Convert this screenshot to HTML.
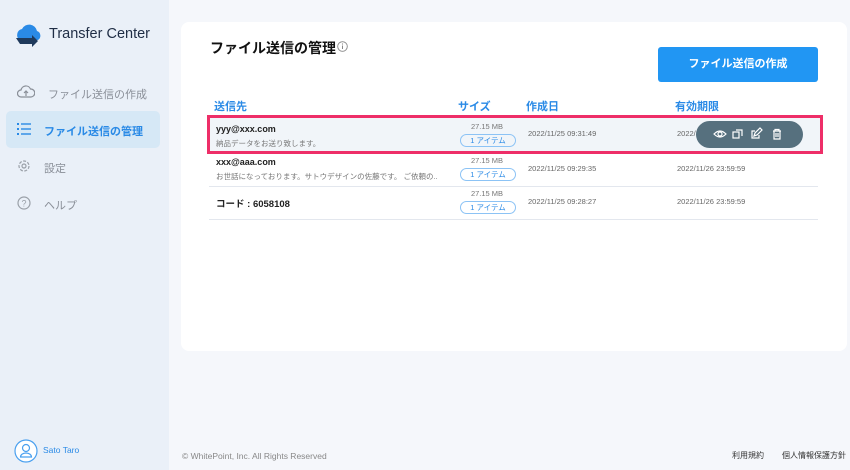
<!DOCTYPE html>
<html><head><meta charset="utf-8"><style>
*{margin:0;padding:0;box-sizing:border-box}
body{width:850px;height:470px;position:relative;background:#f5f7fb;font-family:"Liberation Sans","Noto Sans CJK JP",sans-serif;overflow:hidden}
.side{position:absolute;left:0;top:0;width:169px;height:470px;background:#eaf0f8}
.abs{position:absolute;white-space:nowrap}
.card{position:absolute;left:181px;top:22px;width:666px;height:329px;background:#fff;border-radius:8px}
.nav{font-size:11px;color:#8a8f98}
.hd{font-size:11px;font-weight:bold;color:#2a8ae6}
.sep{position:absolute;left:209px;width:609px;height:1px;background:#e3e7ee}
.email{font-size:9px;font-weight:bold;color:#222}
.msg{font-size:7.5px;color:#777}
.mb{font-size:7.5px;color:#777;text-align:center;width:60px}
.pill{position:absolute;width:56px;height:13px;border:1px solid #8cc3f5;border-radius:7px;font-size:7.5px;color:#2a8ae6;text-align:center;line-height:11px}
.date{font-size:7.5px;color:#666}
</style></head><body>
<div class="side">
<svg class="abs" style="left:14px;top:22px" width="30" height="28" viewBox="0 0 30 28"><path d="M6 18a6 6 0 0 1 2-11a8 8 0 0 1 15 2a5 5 0 0 1 1 9z" fill="#2a8ae6"/><path d="M2 16h16v-3l6 6-6 6v-3H6z" fill="#1f3a5c"/></svg>
<div class="abs" style="left:49px;top:26px;font-size:14.5px;color:#1f2d45">Transfer Center</div>
<svg class="abs" style="left:17px;top:84px" width="18" height="16" viewBox="0 0 18 16"><path d="M4 13a3.5 3.5 0 0 1 0-7a5 5 0 0 1 9.5-1a3.8 3.8 0 0 1 .5 8z" fill="none" stroke="#8a8f98" stroke-width="1.2"/><path d="M9 12V7M7 9l2-2 2 2" fill="none" stroke="#8a8f98" stroke-width="1.2"/></svg>
<div class="abs nav" style="left:48px;top:86px">ファイル送信の作成</div>
<div class="abs" style="left:6px;top:111px;width:154px;height:37px;background:#d6e8f6;border-radius:5px"></div>
<svg class="abs" style="left:17px;top:123px" width="14" height="12" viewBox="0 0 14 12"><g fill="#2a8ae6"><rect x="0" y="0" width="2" height="2"/><rect x="0" y="5" width="2" height="2"/><rect x="0" y="10" width="2" height="2"/><rect x="4" y="0.3" width="10" height="1.4"/><rect x="4" y="5.3" width="10" height="1.4"/><rect x="4" y="10.3" width="10" height="1.4"/></g></svg>
<div class="abs" style="left:44px;top:123px;font-size:11px;font-weight:bold;color:#2a8ae6">ファイル送信の管理</div>
<svg class="abs" style="left:17px;top:159px" width="14" height="14" viewBox="0 0 14 14"><circle cx="7" cy="7" r="5" fill="none" stroke="#9aa0a8" stroke-width="1.2" stroke-dasharray="3 1.5"/><circle cx="7" cy="7" r="2" fill="none" stroke="#9aa0a8" stroke-width="1.2"/></svg>
<div class="abs nav" style="left:44px;top:160px">設定</div>
<svg class="abs" style="left:17px;top:196px" width="14" height="14" viewBox="0 0 14 14"><circle cx="7" cy="7" r="6" fill="none" stroke="#9aa0a8" stroke-width="1.2"/><text x="7" y="10.5" font-size="9" text-anchor="middle" fill="#9aa0a8" font-family="Liberation Sans">?</text></svg>
<div class="abs nav" style="left:44px;top:197px">ヘルプ</div>
<svg class="abs" style="left:14px;top:439px" width="24" height="24" viewBox="0 0 24 24"><circle cx="12" cy="12" r="11" fill="#fff" stroke="#4aa0ef" stroke-width="1.2"/><circle cx="12" cy="9" r="3.5" fill="none" stroke="#4aa0ef" stroke-width="1.2"/><path d="M6.5 18a5.5 4 0 0 1 11 0z" fill="none" stroke="#4aa0ef" stroke-width="1.2"/></svg>
<div class="abs" style="left:43px;top:445px;font-size:8.5px;color:#2a8ae6">Sato Taro</div>
</div>
<div class="card"></div>
<div class="abs" style="left:210px;top:38px;font-size:14px;font-weight:bold;color:#111">ファイル送信の管理</div>
<svg class="abs" style="left:337px;top:41px" width="11" height="11" viewBox="0 0 11 11"><circle cx="5.5" cy="5.5" r="4.8" fill="none" stroke="#888" stroke-width="0.9"/><path d="M5.5 4.5v3.5" stroke="#888"/><circle cx="5.5" cy="3" r=".6" fill="#888"/></svg>
<div class="abs" style="left:658px;top:47px;width:160px;height:35px;background:#2196f3;border-radius:3px;color:#fff;font-size:11px;font-weight:bold;text-align:center;line-height:35px">ファイル送信の作成</div>
<div class="abs hd" style="left:214px;top:98px">送信先</div>
<div class="abs hd" style="left:458px;top:98px">サイズ</div>
<div class="abs hd" style="left:526px;top:98px">作成日</div>
<div class="abs hd" style="left:675px;top:98px">有効期限</div>
<div class="abs" style="left:207px;top:115px;width:616px;height:39px;background:#f1f5f9;border:3px solid #ee2e68"></div>
<div class="sep" style="top:186px"></div>
<div class="sep" style="top:219px"></div>
<div class="abs email" style="left:216px;top:124px">yyy@xxx.com</div>
<div class="abs msg" style="left:216px;top:138px">納品データをお送り致します。</div>
<div class="abs mb" style="left:457px;top:122px">27.15 MB</div>
<div class="pill" style="left:460px;top:134px">1 アイテム</div>
<div class="abs date" style="left:528px;top:129px">2022/11/25 09:31:49</div>
<div class="abs date" style="left:677px;top:129px">2022/11/26 23:59:59</div>
<div class="abs" style="left:696px;top:121px;width:107px;height:27px;background:#56707e;border-radius:14px"></div>
<svg class="abs" style="left:713px;top:127px" width="80" height="14" viewBox="0 0 80 14" fill="none" stroke="#fff" stroke-width="1.2"><path d="M1 7q6-6 12 0q-6 6-12 0z"/><circle cx="7" cy="7" r="2"/><rect x="20" y="5" width="6" height="6"/><path d="M23 3h6v6"/><path d="M42 4h-3v7h7v-3M41 9l1-3 5-5 2 2-5 5z"/><path d="M60 4h8M62 4v-1.5h4V4M61 4v8h6V4M63 6v4M65 6v4"/></svg>
<div class="abs email" style="left:216px;top:157px">xxx@aaa.com</div>
<div class="abs msg" style="left:216px;top:171px">お世話になっております。サトウデザインの佐藤です。 ご依頼の..</div>
<div class="abs mb" style="left:457px;top:156px">27.15 MB</div>
<div class="pill" style="left:460px;top:168px">1 アイテム</div>
<div class="abs date" style="left:528px;top:164px">2022/11/25 09:29:35</div>
<div class="abs date" style="left:677px;top:164px">2022/11/26 23:59:59</div>
<div class="abs" style="left:216px;top:196px;font-size:9.5px;font-weight:bold;color:#222">コード : 6058108</div>
<div class="abs mb" style="left:457px;top:189px">27.15 MB</div>
<div class="pill" style="left:460px;top:201px">1 アイテム</div>
<div class="abs date" style="left:528px;top:197px">2022/11/25 09:28:27</div>
<div class="abs date" style="left:677px;top:197px">2022/11/26 23:59:59</div>
<div class="abs" style="left:182px;top:451px;font-size:8.5px;color:#888">© WhitePoint, Inc. All Rights Reserved</div>
<div class="abs" style="left:732px;top:450px;font-size:8px;color:#333">利用規約</div>
<div class="abs" style="left:782px;top:450px;font-size:8px;color:#333">個人情報保護方針</div>
</body></html>
